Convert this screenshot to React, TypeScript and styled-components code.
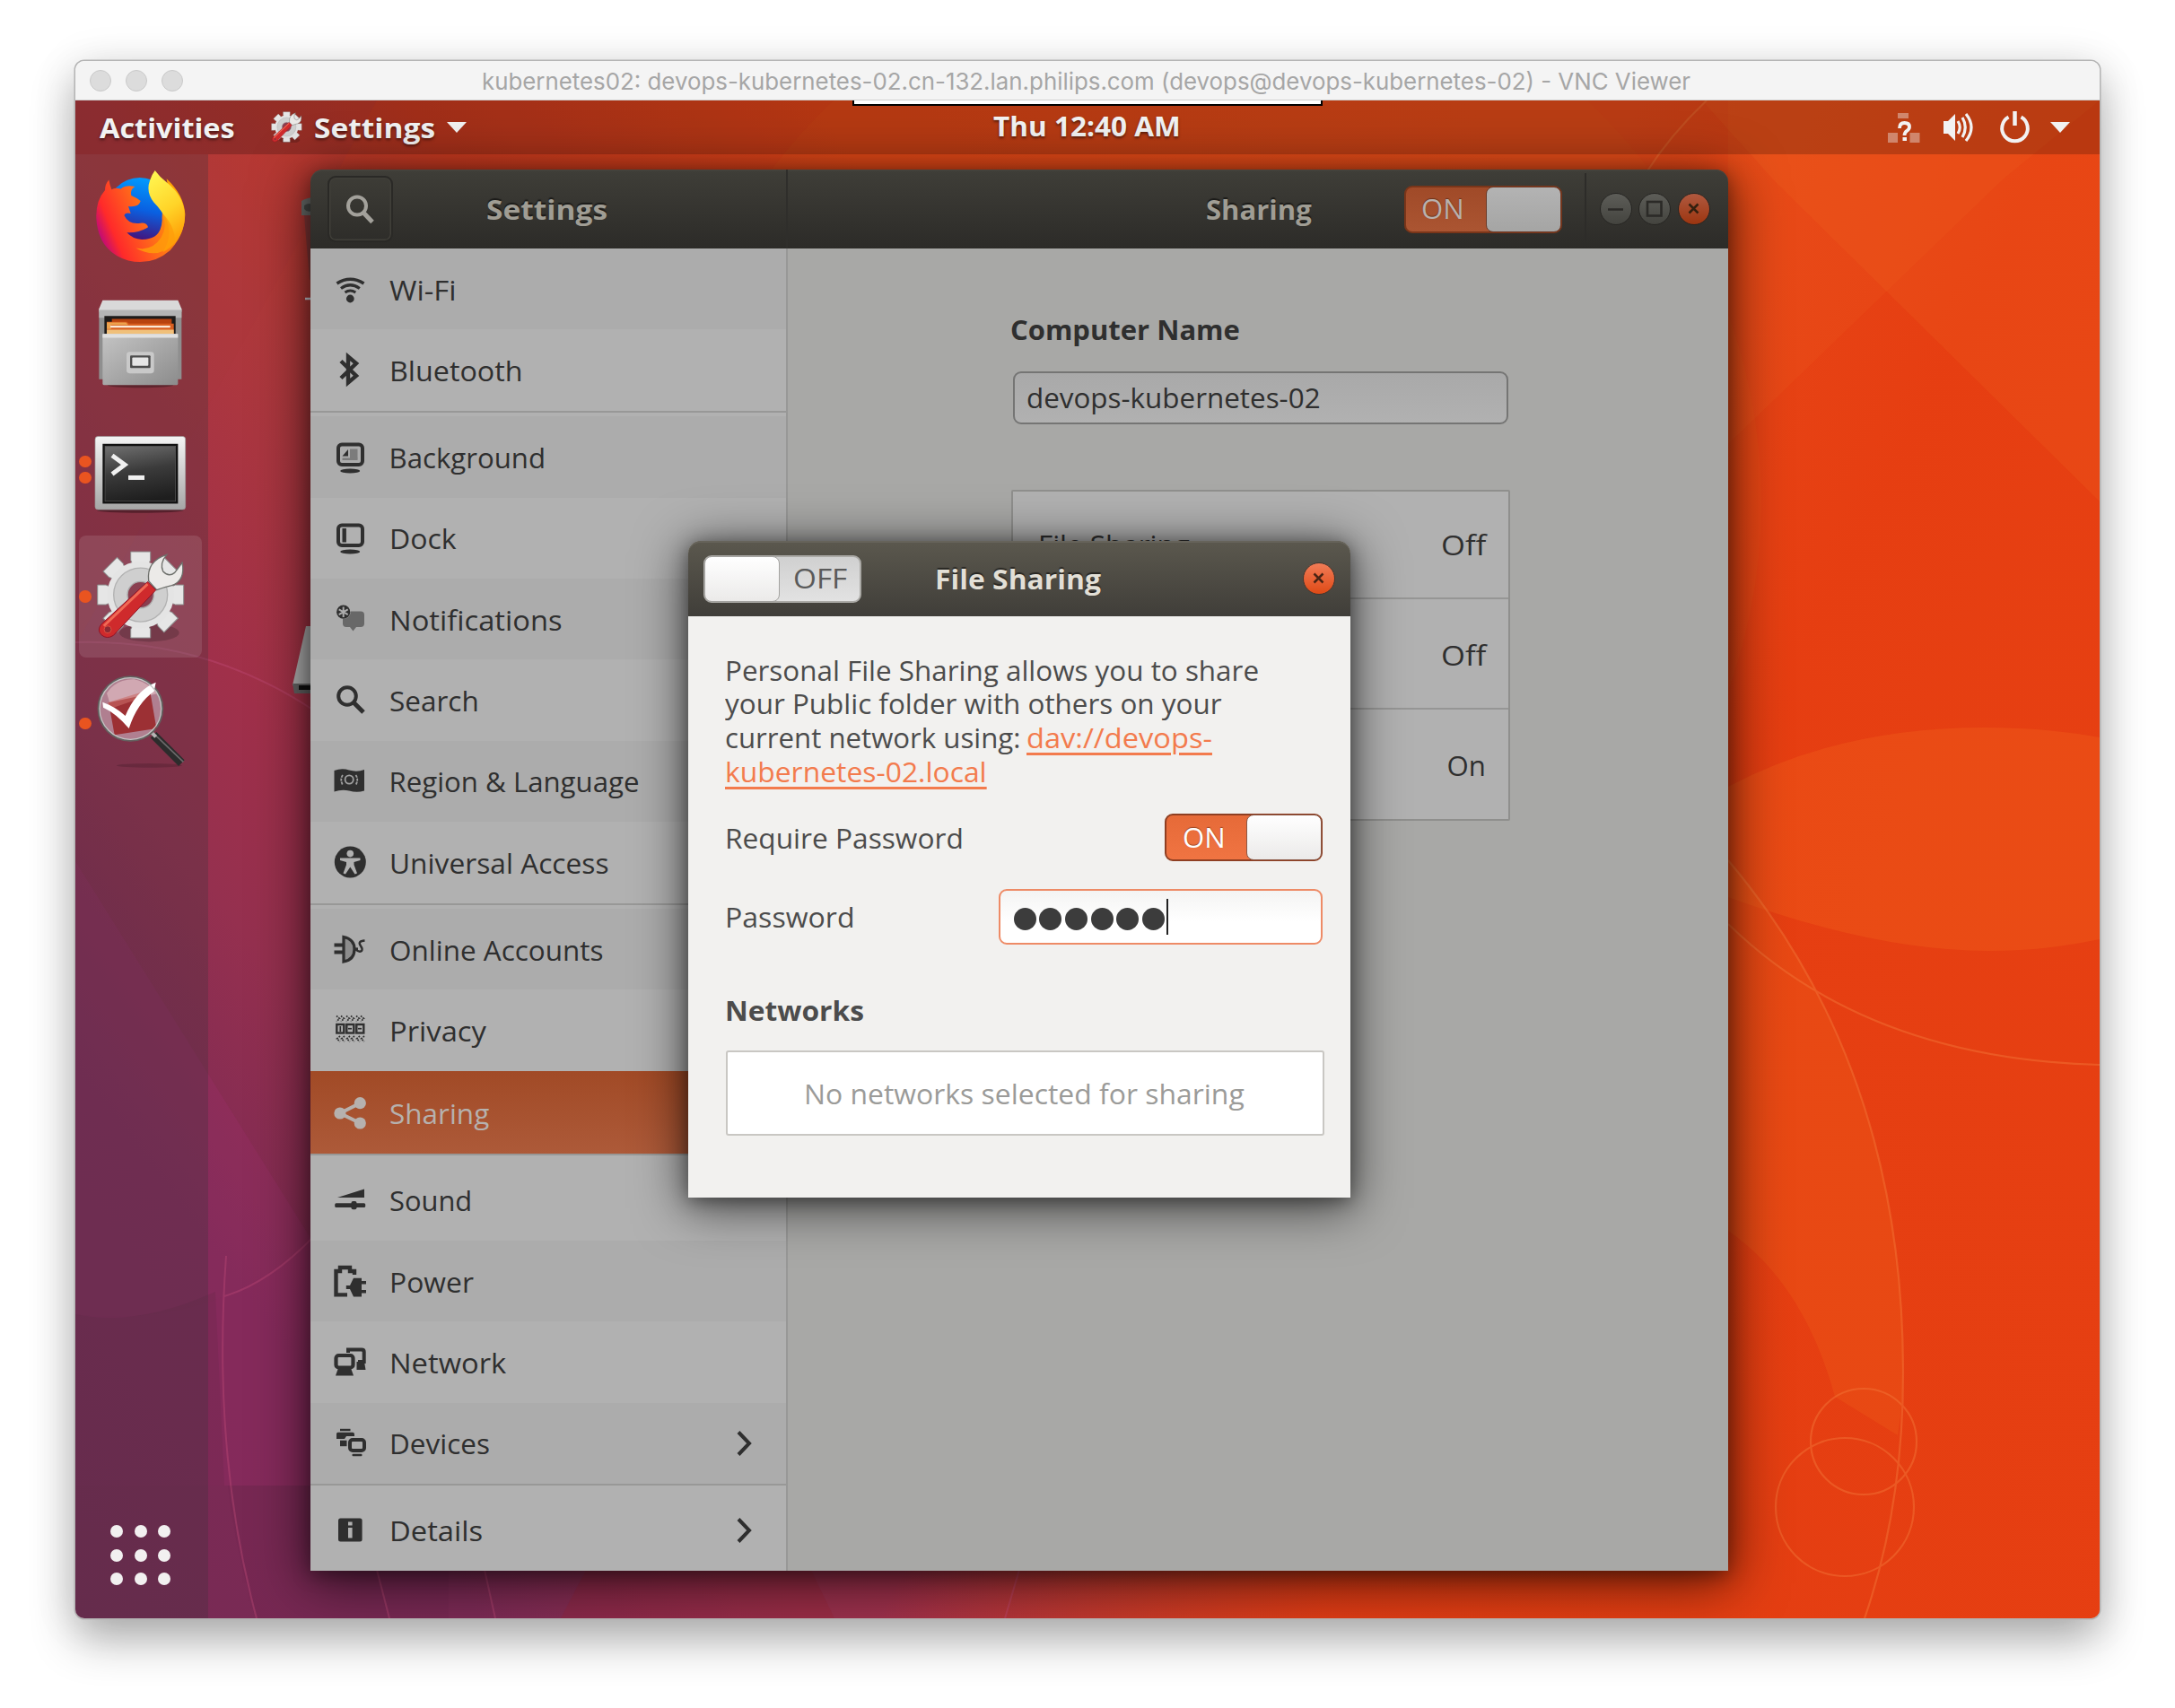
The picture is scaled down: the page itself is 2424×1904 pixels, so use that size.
import React, { useLayoutEffect, useRef, useState } from "react";
import styled, { createGlobalStyle, css } from "styled-components";

const GlobalStyle = createGlobalStyle`
  * { box-sizing: border-box; }
  html, body { margin: 0; background: #fff; }
  body { width: 2424px; height: 1904px; overflow: hidden; }
`;

const UI_FONT = `"Open Sans", "Noto Sans", sans-serif`;
const INK = "#2f2f2f";

/* ---------- text ---------- */

const TextSpan = styled.span<{ $bold?: boolean; $size?: number }>`
  display: inline-block;
  white-space: pre;
  transform-origin: 0 50%;
  font-weight: ${(p) => (p.$bold ? 700 : 400)};
  font-size: ${(p) => p.$size ?? 31.2}px;
`;

const TextBox = styled.span`
  display: block;
  flex: none;
  white-space: pre;
  margin-left: -1.5px;
  margin-right: 1.5px;
`;

/* A label whose run of glyphs is condensed or widened to a set width. */
function Label(props: { children: string; width: number; bold?: boolean; size?: number; className?: string }) {
  const ref = useRef<HTMLSpanElement>(null);
  const [ratio, setRatio] = useState(1);
  useLayoutEffect(() => {
    if (ref.current) setRatio((props.width + 2) / ref.current.offsetWidth);
  }, [props.width]);
  return (
    <TextBox className={props.className} style={{ width: props.width }}>
      <TextSpan ref={ref} $bold={props.bold} $size={props.size} style={{ transform: `scaleX(${ratio})` }}>
        {props.children}
      </TextSpan>
    </TextBox>
  );
}

/* ---------- outer window ---------- */

const Page = styled.div`
  width: 2424px;
  height: 1904px;
  padding: 68px 0 0 84px;
  overflow: hidden;
  background: #fff;
  font-family: ${UI_FONT};
`;

const MacWindow = styled.div`
  width: 2256px;
  height: 1736px;
  border-radius: 10px;
  box-shadow: 0 0 0 1.5px #b4b4b4, 0 24px 50px rgba(0, 0, 0, 0.3), 0 4px 50px rgba(0, 0, 0, 0.1);
  display: flex;
  flex-direction: column;
`;

const MacTitle = styled.div`
  height: 44px;
  flex: none;
  display: grid;
  grid-template-columns: 454px 1fr;
  align-items: center;
  padding-top: 1.5px;
  background: #f4f4f4;
  border-bottom: 1.5px solid #cfcfcf;
  border-radius: 10px 10px 0 0;
  color: #a6a6a6;
  font-family: Inter, "Liberation Sans", sans-serif;
`;

const Lights = styled.div`
  display: flex;
  gap: 16px;
  padding-left: 16px;
`;

const Light = styled.i`
  width: 24px;
  height: 24px;
  border-radius: 50%;
  background: #dcdcdc;
  border: 1px solid #cacaca;
`;

const Desktop = styled.div`
  position: relative;
  flex: 1;
  overflow: hidden;
  border-radius: 0 0 10px 10px;
  display: flex;
  flex-direction: column;
`;

const WallpaperSvg = styled.svg`
  position: absolute;
  inset: 0;
  width: 2256px;
  height: 1692px;
`;

/* ---------- shell ---------- */

const TopBar = styled.div`
  position: relative;
  height: 59.5px;
  flex: none;
  display: grid;
  grid-template-columns: 1fr auto 1fr;
  align-items: center;
  background: rgba(0, 0, 0, 0.2);
  color: #f2f2f2;
  text-shadow: 0 2px 3px rgba(0, 0, 0, 0.5);
`;

const BarLeft = styled.div`
  display: flex;
  align-items: center;
  padding: 0 0 0 28px;
`;

const Clock = styled.div`
  padding-bottom: 3px;
`;

const AppMenu = styled.div`
  display: flex;
  align-items: center;
  margin-left: 41px;
  gap: 14px;
`;

const BarRight = styled.div`
  display: flex;
  justify-content: flex-end;
  align-items: center;
  padding-right: 33px;
`;

const Caret = styled.i<{ $gap?: number }>`
  margin-left: ${(p) => p.$gap ?? 0}px;
  border: 11px solid transparent;
  border-top: 12px solid #f2f2f2;
  border-bottom: 0;
`;

const ViewerTab = styled.div`
  position: absolute;
  left: 866px;
  top: 0;
  width: 524px;
  height: 6px;
  background: #fff;
  border: 2px solid #000;
  border-top: 0;
`;

const Dock = styled.div`
  position: relative;
  width: 147.5px;
  flex: 1;
  display: flex;
  flex-direction: column;
  gap: 5px;
  padding: 1px 6.5px 37px 4.3px;
  background: rgba(60, 50, 60, 0.29);
`;

const Tile = styled.div<{ $active?: boolean }>`
  position: relative;
  height: 136.4px;
  border-radius: 8px;
  background: ${(p) => (p.$active ? "rgba(255,255,255,0.11)" : "transparent")};
`;

const TileSvg = styled.svg`
  display: block;
  width: 136px;
  height: 136px;
  overflow: visible;
`;

const Running = styled.div`
  position: absolute;
  left: 0;
  top: 0;
  height: 100%;
  display: flex;
  flex-direction: column;
  justify-content: center;
  gap: 5px;
`;

const Pip = styled.i`
  width: 13.4px;
  height: 13.4px;
  border-radius: 50%;
  background: #e95420;
`;

const AppGrid = styled.div`
  margin-top: auto;
  margin-left: 35px;
  display: grid;
  grid-template-columns: repeat(3, 14px);
  gap: 12.5px;
  i { width: 14px; height: 14px; border-radius: 50%; background: #f2f0f0; }
`;

/* ---------- settings window ---------- */

const SettingsWindow = styled.div`
  position: absolute;
  left: 262px;
  top: 77px;
  width: 1580px;
  height: 1562px;
  border-radius: 14px 14px 0 0;
  box-shadow: 0 10px 60px 4px rgba(0, 0, 0, 0.62), 0 4px 20px rgba(0, 0, 0, 0.35);
  display: grid;
  grid-template-columns: 532px 1fr;
  grid-template-rows: 88px 1fr;
`;

const headerPaint = css`
  background: linear-gradient(#3f3e38, #2c2b28);
  box-shadow: inset 0 1.5px 0 #45443e;
  color: #a09d94;
  text-shadow: 0 -2px 1px rgba(0, 0, 0, 0.5);
`;

const HeaderLeft = styled.div`
  ${headerPaint}
  border-radius: 14px 0 0 0;
  border-right: 2px solid #2f2e2b;
  display: flex;
  align-items: center;
  padding-left: 18.5px;
`;

const HeaderRight = styled.div`
  ${headerPaint}
  border-radius: 0 14px 0 0;
  display: flex;
  align-items: center;
  padding-left: 467.5px;
`;

const TitleGap = styled.div`
  width: 105px;
  margin-left: -1px;
  margin-right: -1px;
`;

const SearchButton = styled.div`
  width: 73.5px;
  height: 73.5px;
  margin-right: 105px;
  border: 2px solid #2a2926;
  border-radius: 9px;
  box-shadow: inset 0 0 0 1.5px #403f39;
  display: grid;
  place-items: center;
`;

const WindowButtons = styled.div`
  display: flex;
  gap: 7.9px;
  margin-left: 25.5px;
  padding: 0 0 0 14.5px;
  height: 80px;
  align-items: center;
  border-left: 2px solid #2d2c29;
`;

const RoundButton = styled.div<{ $kind: "gray" | "dimClose" | "close" }>`
  width: 36px;
  height: 36px;
  flex: none;
  border-radius: 50%;
  border: 1.5px solid ${(p) => (p.$kind === "close" ? "#43362f" : "#262522")};
  background: ${(p) =>
    p.$kind === "gray"
      ? "linear-gradient(#5d5d58, #44443f)"
      : p.$kind === "close"
      ? "linear-gradient(#f17c57, #df4a16)"
      : "linear-gradient(#b0593f, #9c3510)"};
  svg { display: block; width: 33px; height: 33px; }
`;

const Sidebar = styled.div`
  background: #b1b1b1;
  border-right: 2px solid #989897;
`;

const Row = styled.div<{ $shade?: boolean; $selected?: boolean }>`
  height: ${(p) => (p.$selected ? 92.4 : 90.4)}px;
  display: flex;
  align-items: center;
  padding: ${(p) => (p.$selected ? 2 : 1)}px 37px 0 26px;
  color: ${(p) => (p.$selected ? "#b6b1ae" : INK)};
  background: ${(p) =>
    p.$selected ? "linear-gradient(#a14a26, #ad5a39)" : p.$shade ? "#acacac" : "#b1b1b1"};
`;

const RowIcon = styled.svg`
  width: 36px;
  height: 36px;
  flex: none;
  margin-right: 27px;
  overflow: visible;
`;

const Chevron = styled.svg`
  width: 18px;
  height: 30px;
  margin-left: auto;
`;

const Separator = styled.div`
  height: 6.4px;
  border-top: 2px solid #989897;
  background: #b1b1b1;
`;

const Panel = styled.div`
  background: #a8a8a6;
  padding: 69px 0 0 249px;
  color: ${INK};
`;

const NameEntry = styled.div`
  margin: 26px 0 73px 1.6px;
  width: 552px;
  height: 59px;
  border: 2px solid #757574;
  border-radius: 9px;
  background: linear-gradient(#a9a9a9, #b1b1b1);
  display: flex;
  align-items: center;
  padding: 0 0 2px 15px;
`;

const Services = styled.div`
  width: 556px;
  border: 2px solid #8f8f8d;
  background: #b1b1b1;
  border-radius: 2px;
`;

const Service = styled.div`
  height: 118px;
  display: flex;
  align-items: center;
  justify-content: space-between;
  padding: 0 26px 0 29px;
  & + & {
    height: 123.3px;
    padding-top: 3px;
    border-top: 2px solid #969695;
  }
`;

const ServiceState = styled.div`
  margin-left: auto;
`;

/* ---------- switch ---------- */

const Track = styled.div<{ $on?: boolean; $dim?: boolean }>`
  width: 176px;
  height: 53px;
  flex: none;
  display: flex;
  flex-direction: ${(p) => (p.$on ? "row" : "row-reverse")};
  align-items: center;
  border-radius: 9px;
  border: 2px solid ${(p) => (p.$dim ? "#7a3519" : p.$on ? "#8f3f22" : "#aaa9a5")};
  background: ${(p) =>
    p.$dim
      ? "linear-gradient(#a04a28, #ab5532)"
      : p.$on
      ? "linear-gradient(#e66a38, #f07442)"
      : "linear-gradient(#d0d0d0, #e2e2e2)"};
  color: ${(p) => (p.$dim ? "#b9b1ad" : p.$on ? "#fff" : "#5a5a5a")};
  text-shadow: ${(p) => (p.$on ? "0 -1px 1px rgba(0,0,0,0.35)" : "none")};
`;

const Caption = styled.div<{ $on?: boolean }>`
  flex: 1;
  display: flex;
  justify-content: center;
  padding: 0 ${(p) => (p.$on ? 6 : 0)}px 2px ${(p) => (p.$on ? 0 : 3)}px;
`;

const Knob = styled.div<{ $on?: boolean; $dim?: boolean }>`
  width: 84px;
  height: 51px;
  margin: -1px;
  border-radius: 8px;
  border: 1.5px solid ${(p) => (p.$dim ? "#6b3a28" : p.$on ? "#8a5744" : "#a3a29f")};
  background: ${(p) => (p.$dim ? "linear-gradient(#b3b3b3, #a5a5a4)" : "linear-gradient(#fff, #ebeae9)")};
`;

function Switch({ on, dim }: { on?: boolean; dim?: boolean }) {
  return (
    <Track $on={on} $dim={dim}>
      <Caption $on={on}>
        <Label width={on ? 46 : 58} size={30.5}>{on ? "ON" : "OFF"}</Label>
      </Caption>
      <Knob $on={on} $dim={dim} />
    </Track>
  );
}

/* ---------- dialog ---------- */

const Dialog = styled.div`
  position: absolute;
  left: 683px;
  top: 491px;
  width: 738px;
  height: 732px;
  border-radius: 14px 14px 0 0;
  background: #f2f1ef;
  box-shadow: 0 8px 55px 4px rgba(0, 0, 0, 0.6), 0 3px 20px rgba(0, 0, 0, 0.4);
  color: #4c4c4c;
`;

const DialogHeader = styled.div`
  height: 84px;
  border-radius: 14px 14px 0 0;
  background: linear-gradient(#5b584e, #403e39);
  box-shadow: inset 0 2px 0 #66635a;
  color: #e2dfd6;
  text-shadow: 0 -2px 1px rgba(0, 0, 0, 0.5);
  display: flex;
  align-items: center;
  justify-content: space-between;
  padding: 0 17px;
`;

const HeaderEnd = styled.div`
  width: 178px;
  display: flex;
  justify-content: flex-end;
`;

const DialogBody = styled.div`
  padding: 41px 29px 0 42.5px;
`;

const Line = styled.div`
  height: 37.6px;
  display: flex;
  gap: 9px;
  align-items: center;
`;

const LinkLabel = styled(Label)`
  color: #f37b4d;
  span {
    text-decoration: underline 2.5px;
    text-underline-offset: 5px;
  }
`;

const Field = styled.div<{ $top: number }>`
  margin-top: ${(p) => p.$top}px;
  padding-right: 2px;
  display: flex;
  align-items: center;
  justify-content: space-between;
`;

const PasswordEntry = styled.div`
  width: 361px;
  height: 61.5px;
  border: 2.5px solid #ee8b66;
  border-radius: 9px;
  background: linear-gradient(#f4f4f3, #fff 60%);
  display: flex;
  align-items: center;
  gap: 3.7px;
  padding-left: 14.5px;
`;

const Bullet = styled.i`
  width: 25px;
  height: 25px;
  margin-top: 4px;
  border-radius: 50%;
  background: #3c3c3c;
`;

const Cursor = styled.i`
  width: 2px;
  height: 40px;
  margin-left: -2px;
  background: #222;
`;

const SectionTitle = styled.div`
  margin: 54.5px 0 26.5px;
  height: 37.5px;
  display: flex;
  align-items: center;
`;

const EmptyList = styled.div`
  height: 94.5px;
  width: 667px;
  margin-left: -1px;
  border: 2px solid #c9c7c3;
  border-radius: 3px;
  background: #fff;
  color: #9b9b99;
  display: flex;
  align-items: center;
  justify-content: center;
`;

/* ---------- wallpaper ---------- */

const Wallpaper = () => (
  <WallpaperSvg viewBox="84 112 2256 1692">
    <defs>
      <linearGradient id="base" gradientUnits="userSpaceOnUse" x1="84" y1="1804" x2="1892" y2="448">
        <stop offset="0" stopColor="#772a54" />
        <stop offset="0.16" stopColor="#7c2a55" />
        <stop offset="0.27" stopColor="#95304f" />
        <stop offset="0.34" stopColor="#a0304a" />
        <stop offset="0.46" stopColor="#b0393b" />
        <stop offset="0.58" stopColor="#c83a20" />
        <stop offset="0.74" stopColor="#e04417" />
        <stop offset="1" stopColor="#e74a19" />
      </linearGradient>
      <linearGradient id="floor" gradientUnits="userSpaceOnUse" x1="1340" y1="1080" x2="1900" y2="1360">
        <stop offset="0" stopColor="#e63c10" stopOpacity="0" />
        <stop offset="0.7" stopColor="#e63c10" stopOpacity="0.85" />
        <stop offset="1" stopColor="#e63e11" stopOpacity="0.9" />
      </linearGradient>
    </defs>
    <rect x="84" y="112" width="2256" height="1692" fill="url(#base)" />
    <rect x="84" y="112" width="2256" height="1692" fill="url(#floor)" />
    <path d="M84 112H420L84 720Z" fill="#a8353c" opacity="0.2" />
    <path d="M84 960L346 1380V1656H250L240 1440Q150 1480 84 1465Z" fill="#a03070" opacity="0.25" />
    <path d="M84 1466Q250 1480 346 1380V1656H84Z" fill="#8a2c66" opacity="0.12" />
    <path d="M254 1656H500V1804H286Q262 1730 254 1656Z" fill="#6b2450" opacity="0.18" />
    <path d="M700 1660L625 1804H930L860 1660Z" fill="#9c2030" opacity="0.25" />
    <path d="M1897 112L1976 200L2340 559V112Z" fill="#f06a22" opacity="0.2" />
    <path d="M2340 112L2232 200L1926 495V112Z" fill="#f06a22" opacity="0.14" />
    <circle cx="1349" cy="560" r="614" fill="#f06a22" opacity="0.1" />
    <path d="M1926 877Q2050 811 2212 811Q2280 811 2340 822V1047Q2280 1060 2215 1060Q2090 1060 1926 1000Z" fill="#f0601c" opacity="0.36" />
    <path d="M1926 959Q2121 1190 2121 1530Q2121 1560 2115 1600L2045 1557Q2010 1430 1926 1372Z" fill="#f0601c" opacity="0.3" />
    <g fill="none" stroke="#f4793a" strokeWidth="2.2" opacity="0.45">
      <path d="M1902 112Q1862 150 1835 192" />
      <path d="M1926 1030Q2080 1180 2340 1187" />
      <path d="M1926 959Q2121 1190 2121 1530Q2121 1680 2078 1804" />
      <circle cx="2077" cy="1607" r="59" />
      <circle cx="2056" cy="1680" r="77" />
    </g>
    <g fill="none" stroke="#c04a78" strokeWidth="2" opacity="0.4">
      <path d="M84 716Q230 712 350 792" />
      <path d="M350 1378Q300 1430 250 1445" />
      <path d="M252 1400Q236 1620 286 1804M420 1750L434 1804M540 1750L552 1804" />
      <path d="M1136 1750L1120 1804" />
    </g>
    <g>
      <path d="M336 224Q350 216 364 224V240H336Z" fill="#6d716f" />
      <path d="M339 229Q345 225 350 229V234Q343 238 339 233Z" fill="#474b49" />
      <path d="M339 240H350V312H345Z" fill="#8c3a3a" />
      <path d="M340 333H350" stroke="#d8dbe4" strokeWidth="2.5" />
      <path d="M341 698H352V764H326Z" fill="#b4b4b4" />
      <path d="M326 762H352V773H328Z" fill="#666" />
      <path d="M333 764H352V769H333Z" fill="#111" />
    </g>
  </WallpaperSvg>
);

/* ---------- dock icons ---------- */

const Firefox = () => (
  <TileSvg viewBox="0 0 136 136">
    <defs>
      <linearGradient id="fxBody" x1="0" y1="0.6" x2="1" y2="0.2">
        <stop offset="0" stopColor="#c00a78" />
        <stop offset="0.15" stopColor="#ff2a2a" />
        <stop offset="0.5" stopColor="#ff6a1a" />
        <stop offset="1" stopColor="#ffb000" />
      </linearGradient>
      <linearGradient id="fxGlobe" x1="0.6" y1="0" x2="0.4" y2="1">
        <stop offset="0" stopColor="#009cff" />
        <stop offset="0.5" stopColor="#0a5fe0" />
        <stop offset="1" stopColor="#4a0a70" />
      </linearGradient>
      <linearGradient id="fxTail" x1="0.3" y1="0" x2="0.6" y2="1">
        <stop offset="0" stopColor="#fff44f" />
        <stop offset="0.5" stopColor="#ffd428" />
        <stop offset="1" stopColor="#ff9400" />
      </linearGradient>
    </defs>
    <g transform="translate(-8.3 -2.4) scale(0.3333)">
      <circle cx="228" cy="190" r="108" fill="url(#fxGlobe)" />
      <path d="M125 90Q112 104 112 124Q80 160 83 220Q90 330 190 360Q270 378 330 325Q380 270 380 205Q376 140 318 86L322 110Q300 190 303 225Q300 290 235 289Q205 288 185 266Q225 268 256 248Q252 230 225 235Q190 238 176 208Q180 198 198 202L190 178Q225 182 231 160Q215 148 200 142Q195 122 212 112Q180 106 165 120Q145 114 134 122Q128 108 125 90Z" fill="url(#fxBody)" />
      <path d="M279 58Q295 80 318 98Q384 150 378 225Q368 300 305 332Q340 280 318 225Q300 190 275 165Q248 130 262 92Q268 72 279 58Z" fill="url(#fxTail)" />
      <path d="M303 200Q322 245 300 282Q270 330 215 318Q290 360 345 300Q350 250 303 200Z" fill="#ff9d0a" opacity="0.8" />
    </g>
  </TileSvg>
);

const Files = () => (
  <TileSvg viewBox="0 0 136 136">
    <defs>
      <linearGradient id="flFront" x1="0" y1="0" x2="1" y2="1">
        <stop offset="0" stopColor="#c4c4c4" />
        <stop offset="1" stopColor="#8c8c8c" />
      </linearGradient>
    </defs>
    <g transform="translate(-8.3 -143.8) scale(0.3333)">
      <ellipse cx="230" cy="778" rx="110" ry="8" fill="#000" opacity="0.3" />
      <path d="M92 522H368V758H92Z" fill="#8f8f8f" />
      <path d="M104 494H356L368 522V532H92V522Z" fill="#d9d9d9" />
      <path d="M92 526H368V552H92Z" fill="#b4b4b4" />
      <path d="M110 546H348V608H110Z" fill="#1d1b1a" />
      <path d="M135 556H335V575H135Z" fill="#b8430f" />
      <path d="M118 566H185L192 572H342V608H118Z" fill="#d95f20" />
      <path d="M118 568H182L190 576H132V590H118Z" fill="#eda24e" />
      <path d="M118 592H342V608H118Z" fill="#f0c07a" />
      <path d="M130 582H330" stroke="#fbe9d8" strokeWidth="7" />
      <rect x="104" y="606" width="252" height="171" rx="4" fill="url(#flFront)" />
      <rect x="104" y="606" width="252" height="13" fill="#e0e0e0" />
      <rect x="184" y="666" width="92" height="72" rx="10" fill="#c9c9c9" />
      <rect x="196" y="678" width="68" height="42" rx="3" fill="#4c4c4c" />
      <rect x="203" y="685" width="54" height="28" rx="3" fill="#e6e6e6" />
    </g>
  </TileSvg>
);

const Terminal = () => (
  <TileSvg viewBox="0 0 136 136">
    <defs>
      <linearGradient id="tmFrame" x1="0" y1="0" x2="0" y2="1">
        <stop offset="0" stopColor="#f4f4f4" />
        <stop offset="1" stopColor="#a6a6a6" />
      </linearGradient>
      <linearGradient id="tmScreen" x1="0.3" y1="0" x2="0.5" y2="1">
        <stop offset="0" stopColor="#6a6a6a" />
        <stop offset="0.45" stopColor="#3b3b3b" />
        <stop offset="1" stopColor="#1e1e1e" />
      </linearGradient>
    </defs>
    <g transform="translate(-8.3 -285.2) scale(0.3333)">
      <ellipse cx="230" cy="1198" rx="145" ry="8" fill="#000" opacity="0.35" />
      <rect x="79" y="950" width="302" height="245" rx="10" fill="url(#tmFrame)" stroke="#9a9a9a" strokeWidth="2" />
      <rect x="104" y="975" width="252" height="200" fill="#111" />
      <rect x="112" y="983" width="236" height="184" fill="url(#tmScreen)" stroke="#5a5a5a" strokeWidth="2" />
      <path d="M136 1014L178 1045L136 1076" fill="none" stroke="#f0f0f0" strokeWidth="15" />
      <path d="M190 1088H244" stroke="#f0f0f0" strokeWidth="15" />
    </g>
  </TileSvg>
);

const GearArt = () => (
  <g>
    <ellipse cx="260" cy="405" rx="100" ry="30" fill="#000" opacity="0.18" />
    <g fill="#e6e6e6" stroke="#8c8c8c" strokeWidth="3">
      {[0, 45, 90, 135].map((a) => (
        <path key={a} transform={`rotate(${a} 231 278)`} d="M206 180L198 162V134H264V162L256 180V376L264 394V422H198V394L206 376Z" />
      ))}
    </g>
    <circle cx="231" cy="278" r="112" fill="#e4e4e4" />
    <circle cx="231" cy="278" r="90" fill="#cfcfcf" stroke="#b2b2b2" strokeWidth="4" />
    <circle cx="231" cy="278" r="44" fill="#8a3f50" stroke="#aaa" strokeWidth="4" />
    <path d="M258 232Q250 165 318 144Q294 172 306 200Q325 220 345 204Q356 190 370 170Q382 230 335 247Q305 254 285 262Z" fill="#eceae8" stroke="#6e706c" strokeWidth="4" />
    <path d="M255 234L282 262L140 414Q118 428 100 412Q84 396 100 376Z" fill="#cf2a2c" stroke="#8e1428" strokeWidth="3" />
    <path d="M254 242L108 382" stroke="#f06a55" strokeWidth="9" fill="none" />
    <circle cx="121" cy="394" r="12" fill="#8c2a34" stroke="#e05040" strokeWidth="3" />
  </g>
);

const Gear = () => (
  <TileSvg viewBox="0 0 136 136">
    <g transform="translate(-8.3 -26.6) scale(0.3333)">
      <GearArt />
    </g>
  </TileSvg>
);

const Magnifier = () => (
  <TileSvg viewBox="0 0 136 136">
    <g transform="translate(-8.3 -168) scale(0.3333)">
      <ellipse cx="260" cy="850" rx="110" ry="7" fill="#000" opacity="0.15" />
      <path d="M274 748L368 842" stroke="#2c2c2c" strokeWidth="28" />
      <path d="M280 748L374 838" stroke="#6a6a6a" strokeWidth="5" />
      <path d="M262 734L282 754" stroke="#b5b5b5" strokeWidth="12" />
      <circle cx="197" cy="660" r="107" fill="#b07f90" stroke="#63605f" strokeWidth="7" />
      <path d="M118 608Q150 560 210 562Q262 575 285 610L130 648Z" fill="#d9b3ba" opacity="0.8" />
      <path d="M124 640L264 610L284 726L144 748Z" fill="#9c3034" />
      <path d="M120 640L250 600L262 614L130 660Z" fill="#c96a68" opacity="0.6" />
      <path d="M104 638Q150 655 180 684Q215 600 282 572L276 602Q220 640 192 726Q150 676 106 656Z" fill="#fff" />
      <circle cx="197" cy="660" r="103" fill="none" stroke="#c4c4c4" strokeWidth="4" />
    </g>
  </TileSvg>
);

/* ---------- status icons ---------- */

const StatusSvg = styled.svg`
  width: 160px;
  height: 44px;
  overflow: visible;
`;

const StatusIcons = () => (
  <StatusSvg viewBox="2103 119 160 44">
    <g fill="#f2f2f2">
      <g opacity="0.4">
        <rect x="2115" y="125" width="12" height="6" />
        <rect x="2104" y="147" width="11" height="11" />
        <rect x="2128.5" y="147" width="11" height="11" />
      </g>
      <path d="M2117 142Q2117 136 2122.5 136Q2128 136 2128 140.5Q2128 143 2125 145Q2122.5 147 2122.5 150" fill="none" stroke="#f2f2f2" strokeWidth="3.8" />
      <rect x="2120.5" y="152" width="4.5" height="4" />
      <path d="M2166 134H2171L2179 126V156L2171 148H2166Z" />
      <g fill="none" stroke="#f2f2f2" strokeWidth="3.2">
        <path d="M2182 134Q2186.5 141 2182 148" />
        <path d="M2187 130Q2193.5 141 2187 152" />
        <path d="M2191 126Q2203 141 2191 156" />
        <path d="M2238.5 129.5A14.3 14.3 0 1 0 2252.5 129.5" strokeWidth="4" />
        <path d="M2245.5 123V139" strokeWidth="4.5" />
      </g>
    </g>
  </StatusSvg>
);

/* ---------- sidebar icons ---------- */

const stroke = { fill: "none", stroke: "currentColor", strokeWidth: 3.6 } as const;

const icons: Record<string, React.ReactNode> = {
  "Wi-Fi": (
    <g {...stroke}>
      <path d="M3.5 11Q18.3 1.5 33.5 11" />
      <path d="M8 16.5Q18.3 9 28.8 16.5" strokeWidth={3.2} />
      <path d="M12.5 21Q18.3 17 24.3 21" strokeWidth={3} />
      <circle cx="18.3" cy="28" r="4.4" fill="currentColor" stroke="none" />
    </g>
  ),
  Bluetooth: <path {...stroke} strokeWidth={4.4} d="M8 7.5L25 24L16 31.5V2.5L25 10L8 26.5" />,
  Background: (
    <g>
      <rect {...stroke} strokeWidth={4} x="5" y="3.6" width="27" height="22.5" rx="4" />
      <ellipse cx="18.2" cy="33" rx="11" ry="2.4" fill="currentColor" />
      <path d="M9.5 16.5L16 9V16.5Z" fill="currentColor" />
      <rect x="18" y="8.5" width="8.5" height="11" fill="#7c7c7c" />
      <rect x="9.5" y="18.5" width="17" height="2.5" fill="#7c7c7c" />
    </g>
  ),
  Dock: (
    <g>
      <rect {...stroke} strokeWidth={4} x="5" y="3.6" width="27" height="22.5" rx="4" />
      <rect x="9.5" y="7" width="4.4" height="15.5" fill="currentColor" />
      <ellipse cx="18.2" cy="33" rx="11" ry="2.4" fill="currentColor" />
    </g>
  ),
  Notifications: (
    <g>
      <path d="M10 17Q18 17 19 8.5H30Q34 8.5 34 12.5V22Q34 26 30 26H25L21.5 30.5L18 26H14Q10 26 10 22Z" fill="#686868" />
      <circle cx="10.7" cy="9.2" r="7.6" fill="currentColor" />
      <path d="M10.7 3.5V15M5.7 6.3L15.7 12.1M5.7 12.1L15.7 6.3" stroke="#acacac" strokeWidth="2" />
    </g>
  ),
  Search: (
    <g {...stroke} strokeWidth={4}>
      <circle cx="15" cy="13" r="9.8" />
      <path d="M22 20L33 31" strokeWidth={5} />
    </g>
  ),
  "Region & Language": (
    <g>
      <path d="M0.5 6Q9 3 17 5.5Q26 8 34 5V28.5Q26 31 17 28.5Q9 26.5 0.5 29.5Z" fill="currentColor" />
      <g fill="none" stroke="#a0a0a0" strokeWidth="1.8">
        <circle cx="17.2" cy="16" r="4.6" />
        <path d="M10 11Q6.5 16 10 22M24.5 11Q28 16 24.5 22" strokeDasharray="3 1" />
      </g>
    </g>
  ),
  "Universal Access": (
    <g>
      <circle cx="18.3" cy="17" r="17.5" fill="currentColor" />
      <circle cx="18.3" cy="7.6" r="3.8" fill="#b1b1b1" />
      <path d="M7 12.5H29.5V15L22.5 17V20L26 29.5L23.5 30.5L18.3 22.5L13 30.5L10.500 29.500L14 20V17L7 15Z" fill="#b1b1b1" />
    </g>
  ),
  "Online Accounts": (
    <g {...stroke} strokeWidth={3.2}>
      <path d="M0.5 12.5H10M0.5 20.5H10" strokeWidth={4} />
      <path d="M11 3.5Q23 6 23 17Q23 29 11 31Z" fill="#8c8c8c" />
      <path d="M24 17Q28 21 31 19Q32.5 17 30 13.5Q26 8 34.5 7.5" strokeWidth={2.4} />
      <path d="M23 17H27" />
    </g>
  ),
  Privacy: (
    <g>
      {[3, 14, 25].map((x, i) => (
        <g key={x} fill="none" stroke="currentColor" strokeWidth="1.700" strokeDasharray="1.800 1.200">
          <path d={`M${x} 1.5L${x + 3.5} 4.5L${x} 7.7M${x + 5} 1.5L${x + 8.5} 4.5L${x + 5} 7.7`} />
          <path d={`M${x + 4} 24L${x + 0.5} 27L${x + 4} 30.2M${x + 9} 24L${x + 5.5} 27L${x + 9} 30.2`} />
          <rect x={x + 0.3} y="11" width="8" height="9.5" strokeWidth="2.4" strokeDasharray="none" />
          <path d={i ? `M${x + 2} 15.7H${x + 6}` : `M${x + 4.3} 13V19`} strokeDasharray="none" />
        </g>
      ))}
    </g>
  ),
  Sharing: (
    <g fill="currentColor">
      <circle cx="6.9" cy="18" r="6.6" />
      <circle cx="29.3" cy="6.7" r="6.6" />
      <circle cx="29.3" cy="29" r="6.6" />
      <path {...stroke} strokeWidth={4} d="M29.3 6.7L6.9 18L29.3 29" />
    </g>
  ),
  Sound: (
    <g fill="currentColor">
      <path d="M4 15L34 5.5V15Z" />
      <rect x="1.2" y="21.3" width="34" height="4.6" rx="1.5" />
      <rect x="19.5" y="19" width="6" height="9.2" rx="2" />
    </g>
  ),
  Power: (
    <g>
      <path d="M15 32.4H2.5V6H7V2H18V6H23V10" {...stroke} strokeWidth={4.4} />
      <path d="M13.8 22H18L22 13.8H31V17H36V20.5H31V27H36V30.5H31V34.5H22L18 26H13.8Z" fill="currentColor" />
    </g>
  ),
  Network: (
    <g fill="currentColor">
      <rect x="2.5" y="10" width="19" height="13.5" rx="3" {...stroke} strokeWidth={4.2} />
      <path d="M5 24H19L22 32.4H2Z" />
      <path d="M16 7V3.6H31Q33.7 3.6 33.7 6V17H27" {...stroke} strokeWidth={4} />
      <path d="M25.5 17H34L35.5 26H25.5Z" />
    </g>
  ),
  Devices: (
    <g fill="currentColor">
      <rect x="7" y="1.8" width="11.5" height="2.4" />
      <path d="M4.5 5.8H21Q23 5.8 23 8V10H14L12 13H3V7.5Q3 5.8 4.5 5.8Z" />
      <rect x="7" y="14.7" width="7.5" height="6.5" />
      <rect x="18" y="14" width="16" height="12" rx="3" {...stroke} strokeWidth={4} />
      <rect x="20.5" y="29.8" width="11" height="2.4" rx="1" />
    </g>
  ),
  Details: (
    <g>
      <rect x="5" y="4.5" width="26.6" height="26" rx="2.5" fill="currentColor" />
      <rect x="16" y="8.5" width="4.6" height="4" fill="#b1b1b1" />
      <rect x="16" y="15" width="4.6" height="11.5" fill="#b1b1b1" />
    </g>
  ),
};

interface Item { name: string; width: number; shade?: boolean; selected?: boolean; more?: boolean; sep?: boolean }

const items: Item[] = [
  { name: "Wi-Fi", width: 73, shade: true },
  { name: "Bluetooth", width: 147, sep: true },
  { name: "Background", width: 173, shade: true },
  { name: "Dock", width: 73 },
  { name: "Notifications", width: 191, shade: true },
  { name: "Search", width: 98 },
  { name: "Region & Language", width: 277, shade: true },
  { name: "Universal Access", width: 243, sep: true },
  { name: "Online Accounts", width: 236, shade: true },
  { name: "Privacy", width: 106 },
  { name: "Sharing", width: 109, selected: true, sep: true },
  { name: "Sound", width: 90 },
  { name: "Power", width: 92, shade: true },
  { name: "Network", width: 128 },
  { name: "Devices", width: 110, shade: true, more: true, sep: true },
  { name: "Details", width: 102, more: true },
];

const services = [
  { name: "File Sharing", width: 167, state: "Off", stateWidth: 48 },
  { state: "Off", stateWidth: 48 },
  { state: "On", stateWidth: 41 },
];

const Cross = ({ color }: { color: string }) => (
  <svg viewBox="0 0 33 33">
    <path d="M11.5 11.5L21.5 21.5M21.5 11.5L11.5 21.5" stroke={color} strokeWidth="2.5" />
  </svg>
);

export default function App() {
  return (
    <Page>
      <GlobalStyle />
      <MacWindow>
        <MacTitle>
          <Lights><Light /><Light /><Light /></Lights>
          <Label width={1345} size={26}>
            kubernetes02: devops-kubernetes-02.cn-132.lan.philips.com (devops@devops-kubernetes-02) - VNC Viewer
          </Label>
        </MacTitle>
        <Desktop>
          <Wallpaper />
          <TopBar>
            <BarLeft>
              <Label bold width={149} size={30.5}>Activities</Label>
              <AppMenu>
                <svg width="35" height="35" viewBox="82 128 300 300"><GearArt /></svg>
                <Label bold width={133} size={30.5}>Settings</Label>
                <Caret />
              </AppMenu>
            </BarLeft>
            <Clock><Label bold width={207} size={30.5}>Thu 12:40 AM</Label></Clock>
            <BarRight>
              <StatusIcons />
              <Caret $gap={22} />
            </BarRight>
            <ViewerTab />
          </TopBar>
          <Dock>
            <Tile><Firefox /></Tile>
            <Tile><Files /></Tile>
            <Tile><Running><Pip /><Pip /></Running><Terminal /></Tile>
            <Tile $active><Running><Pip /></Running><Gear /></Tile>
            <Tile><Running><Pip /></Running><Magnifier /></Tile>
            <AppGrid>{Array.from({ length: 9 }, (_, i) => <i key={i} />)}</AppGrid>
          </Dock>

          <SettingsWindow>
            <HeaderLeft>
              <SearchButton>
                <svg width="34" height="34" viewBox="0 0 34 34" fill="none" stroke="#a3a19b" strokeWidth="4">
                  <circle cx="14" cy="13.5" r="10" />
                  <path d="M21 21L31 31.5" strokeWidth="5" />
                </svg>
              </SearchButton>
              <Label bold width={133} size={30.5}>Settings</Label>
            </HeaderLeft>
            <HeaderRight>
              <Label bold width={116} size={30.5}>Sharing</Label>
              <TitleGap />
              <Switch on dim />
              <WindowButtons>
                <RoundButton $kind="gray">
                  <svg viewBox="0 0 33 33"><path d="M8 17.5H25" stroke="#2b2a27" strokeWidth="2.6" /></svg>
                </RoundButton>
                <RoundButton $kind="gray">
                  <svg viewBox="0 0 33 33"><rect x="9" y="9" width="15.5" height="15.5" fill="none" stroke="#2b2a27" strokeWidth="2.6" /></svg>
                </RoundButton>
                <RoundButton $kind="dimClose"><Cross color="#33200f" /></RoundButton>
              </WindowButtons>
            </HeaderRight>
            <Sidebar>
              {items.map((it) => (
                <React.Fragment key={it.name}>
                  <Row $shade={it.shade} $selected={it.selected}>
                    <RowIcon viewBox="0 0 36 36">{icons[it.name]}</RowIcon>
                    <Label width={it.width}>{it.name}</Label>
                    {it.more && (
                      <Chevron viewBox="0 0 18 30">
                        <path d="M2 2.5L14 15L2 27.5" {...stroke} strokeWidth={4} />
                      </Chevron>
                    )}
                  </Row>
                  {it.sep && <Separator />}
                </React.Fragment>
              ))}
            </Sidebar>
            <Panel>
              <Label bold width={254} size={30.5}>Computer Name</Label>
              <NameEntry><Label width={326}>devops-kubernetes-02</Label></NameEntry>
              <Services>
                {services.map((s, i) => (
                  <Service key={i}>
                    {s.name && <Label width={s.width}>{s.name}</Label>}
                    <ServiceState><Label width={s.stateWidth}>{s.state}</Label></ServiceState>
                  </Service>
                ))}
              </Services>
            </Panel>
          </SettingsWindow>

          <Dialog>
            <DialogHeader>
              <Switch />
              <Label bold width={183} size={30.5}>File Sharing</Label>
              <HeaderEnd>
                <RoundButton $kind="close"><Cross color="#4a2414" /></RoundButton>
              </HeaderEnd>
            </DialogHeader>
            <DialogBody>
              <Line><Label width={593}>Personal File Sharing allows you to share</Label></Line>
              <Line><Label width={552}>your Public folder with others on your</Label></Line>
              <Line>
                <Label width={327}>current network using:</Label>
                <LinkLabel width={205}>dav://devops-</LinkLabel>
              </Line>
              <Line><LinkLabel width={290}>kubernetes-02.local</LinkLabel></Line>
              <Field $top={29}>
                <Label width={264}>Require Password</Label>
                <Switch on />
              </Field>
              <Field $top={31}>
                <Label width={143}>Password</Label>
                <PasswordEntry>
                  {Array.from({ length: 6 }, (_, i) => <Bullet key={i} />)}
                  <Cursor />
                </PasswordEntry>
              </Field>
              <SectionTitle><Label bold width={153} size={30.5}>Networks</Label></SectionTitle>
              <EmptyList><Label width={489}>No networks selected for sharing</Label></EmptyList>
            </DialogBody>
          </Dialog>
        </Desktop>
      </MacWindow>
    </Page>
  );
}
